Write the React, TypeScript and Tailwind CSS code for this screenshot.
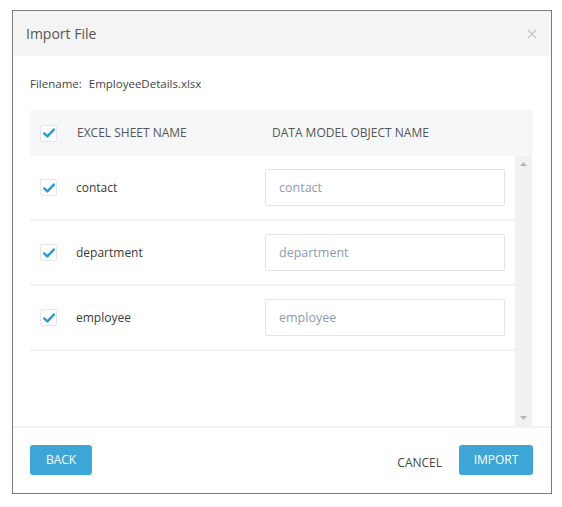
import type { ReactNode } from "react";

const sheets = ["contact", "department", "employee"];

const Check = () => (
  <span className="flex h-[17px] w-[17px] shrink-0 items-center justify-center rounded-[2px] border border-[#e3e6ea] bg-white">
    <svg width="12" height="10" viewBox="0 0 12 10">
      <path d="M1.2 5.4 L4.4 8.4 L10.8 1.6" fill="none" stroke="#2b9bd3" strokeWidth="2.4" strokeLinecap="round" strokeLinejoin="round" />
    </svg>
  </span>
);

const Btn = ({ children, w }: { children: ReactNode; w: string }) => (
  <button className={`h-[30px] ${w} rounded-[3px] bg-[#3ea6d7] text-[12px] text-white`}>{children}</button>
);

export default function App() {
  return (
    <div className="min-h-[507px] bg-white pl-[12px] pt-[10px] font-['Open_Sans',sans-serif]">
      <div className="flex h-[484px] w-[540px] flex-col border border-[#7b7b7b]">
        {/* header */}
        <div className="flex h-[45px] items-center justify-between bg-[#f4f4f4] pl-[13px] pr-[14px]">
          <span className="text-[14px] text-[#555]">Import File</span>
          <svg width="10" height="10" viewBox="0 0 10 10">
            <path d="M1 1 L9 9 M9 1 L1 9" stroke="#c4c4c4" strokeWidth="1.2" />
          </svg>
        </div>

        <div className="flex flex-1 flex-col pl-[17px] pr-[18px]">
          <div className="flex h-[54px] items-center pt-[1px] text-[11.5px] text-[#444]">
            <span>Filename:</span>
            <span className="ml-[7px]">EmployeeDetails.xlsx</span>
          </div>

          {/* table */}
          <div className="flex h-[46px] items-center bg-[#f5f7f9] pl-[10px] text-[12px] text-[#555]">
            <Check />
            <span className="ml-[20px] w-[195px]">EXCEL SHEET NAME</span>
            <span>DATA MODEL OBJECT NAME</span>
          </div>
          <div className="flex h-[270px]">
            <div className="flex-1">
              {sheets.map((s) => (
                <div key={s} className="flex h-[65px] items-center border-b-2 border-[#f1f2f4] pl-[10px]">
                  <Check />
                  <span className="ml-[19px] w-[189px] text-[12px] text-[#3a3a3a]">{s}</span>
                  <input
                    readOnly
                    placeholder={s}
                    className="h-[37px] w-[240px] rounded-[2px] border border-[#e2e4e7] px-[13px] text-[12.5px] placeholder:text-[#8d9cb1]"
                  />
                </div>
              ))}
            </div>
            <div className="flex w-[17px] flex-col items-center justify-between bg-[#f1f1f1] py-[6px]">
              <svg width="7" height="4" viewBox="0 0 7 4"><path d="M0 4 L3.5 0 L7 4Z" fill="#b5b5b5" /></svg>
              <svg width="7" height="4" viewBox="0 0 7 4"><path d="M0 0 L3.5 4 L7 0Z" fill="#b5b5b5" /></svg>
            </div>
            <div className="w-[1px]" />
          </div>
        </div>

        {/* footer */}
        <div className="flex flex-1 items-start justify-between border-t-2 border-[#f1f2f4] pl-[17px] pr-[18px] pt-[17px]">
          <Btn w="w-[62px]">BACK</Btn>
          <div className="flex items-center gap-[17px]">
            <span className="mt-[5px] text-[12px] text-[#444]">CANCEL</span>
            <Btn w="w-[74px]">IMPORT</Btn>
          </div>
        </div>
      </div>
    </div>
  );
}
